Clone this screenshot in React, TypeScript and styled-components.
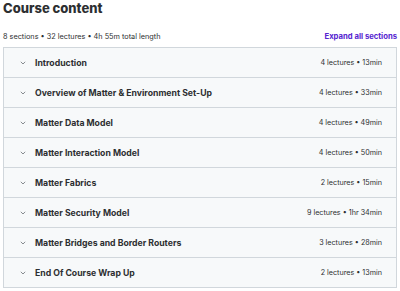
import React from "react";
import styled, { createGlobalStyle } from "styled-components";

const Global = createGlobalStyle`
  html, body { margin: 0; padding: 0; background: #fff; }
  body { font-family: Inter, "Noto Sans", sans-serif; color: #2d2f31; }
`;

const Page = styled.div`
  width: 400px;
  height: 291px;
  padding: 0 3px;
  box-sizing: border-box;
  overflow: hidden;
`;

const Title = styled.h2`
  margin: 0;
  padding-top: 0;
  font-size: 13px;
  line-height: 17px;
  font-weight: 800;
  color: #2d2f31;
`;

const MetaBar = styled.div`
  display: flex;
  justify-content: space-between;
  align-items: center;
  margin-top: 12px;
  height: 14px;
  margin-bottom: 4px;
`;

const Meta = styled.span`
  font-size: 7.3px;
  color: #2d2f31;
`;

const ExpandLink = styled.button`
  border: 0;
  background: none;
  padding: 0;
  font-family: inherit;
  font-size: 7.7px;
  font-weight: 700;
  color: #5624d0;
  cursor: pointer;
`;

const List = styled.div`
  border: 1px solid #d1d7dc;
  display: flex;
  flex-direction: column;
`;

const Row = styled.div`
  display: flex;
  align-items: center;
  height: 29px;
  padding: 0 14px 0 16px;
  background: #f7f9fa;
  & + & { border-top: 1px solid #d1d7dc; }
`;

const Chevron = styled.svg`
  width: 6px;
  height: 6px;
  margin-right: 9px;
  flex: none;
`;

const SectionTitle = styled.span`
  flex: 1;
  font-size: 8.7px;
  font-weight: 700;
  color: #2d2f31;
`;

const SectionMeta = styled.span`
  font-size: 7.2px;
  color: #2d2f31;
`;

const sections = [
  ["Introduction", "4 lectures • 13min"],
  ["Overview of Matter & Environment Set-Up", "4 lectures • 33min"],
  ["Matter Data Model", "4 lectures • 49min"],
  ["Matter Interaction Model", "4 lectures • 50min"],
  ["Matter Fabrics", "2 lectures • 15min"],
  ["Matter Security Model", "9 lectures • 1hr 34min"],
  ["Matter Bridges and Border Routers", "3 lectures • 28min"],
  ["End Of Course Wrap Up", "2 lectures • 13min"],
];

export default function App() {
  return (
    <Page>
      <Global />
      <Title>Course content</Title>
      <MetaBar>
        <Meta>8 sections • 32 lectures • 4h 55m total length</Meta>
        <ExpandLink>Expand all sections</ExpandLink>
      </MetaBar>
      <List>
        {sections.map(([t, m]) => (
          <Row key={t}>
            <Chevron viewBox="0 0 6 6">
              <path d="M0.8 1.8 L3 4 L5.2 1.8" fill="none" stroke="#6a6f73" strokeWidth="0.8" />
            </Chevron>
            <SectionTitle>{t}</SectionTitle>
            <SectionMeta>{m}</SectionMeta>
          </Row>
        ))}
      </List>
    </Page>
  );
}
